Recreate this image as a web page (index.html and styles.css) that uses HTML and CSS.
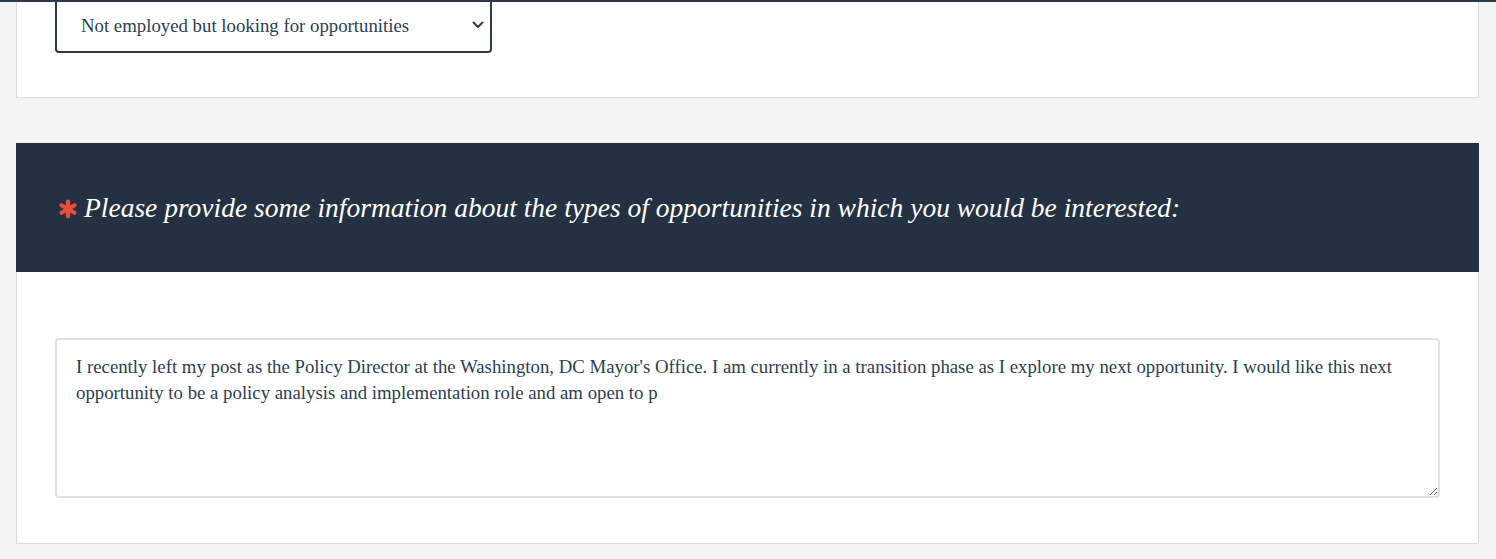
FILE: index.html
```html
<!DOCTYPE html>
<html>
<head>
<meta charset="utf-8">
<link rel="stylesheet" href="styles.css">
</head>
<body>
<div class="topbar"></div>
<main class="page">
  <section class="card card-first">
    <div class="card-body first-body">
      <div class="select-wrap">
        <select class="select">
          <option>Not employed but looking for opportunities</option>
        </select>
        <svg class="chev" width="12" height="8" viewBox="0 0 12 8"><path d="M1.5 1.5 L6 6 L10.5 1.5" fill="none" stroke="#2c3e50" stroke-width="2" stroke-linecap="round" stroke-linejoin="round"/></svg>
      </div>
    </div>
  </section>
  <section class="card">
    <header class="card-head">
      <svg class="req" width="20" height="20" viewBox="0 0 20 20">
        <g stroke="#e74c3c" stroke-width="4.2" stroke-linecap="round">
          <line x1="10" y1="2.5" x2="10" y2="17.5"/>
          <line x1="3.5" y1="6.2" x2="16.5" y2="13.8"/>
          <line x1="3.5" y1="13.8" x2="16.5" y2="6.2"/>
        </g>
      </svg>
      <h2 class="title">Please provide some information about the types of opportunities in which you would be interested:</h2>
    </header>
    <div class="card-body second-body">
      <textarea class="textarea">I recently left my post as the Policy Director at the Washington, DC Mayor's Office. I am currently in a transition phase as I explore my next opportunity. I would like this next opportunity to be a policy analysis and implementation role and am open to p</textarea>
    </div>
  </section>
</main>
</body>
</html>
```
FILE: styles.css
```css
* { box-sizing: border-box; }
html, body {
  margin: 0;
  padding: 0;
  background: #f4f4f4;
  font-family: "Liberation Serif", "Times New Roman", serif;
  color: #2c3e50;
  overflow: hidden;
}
.topbar {
  position: fixed;
  top: 0;
  left: 0;
  right: 0;
  height: 2px;
  background: #2c3a4b;
  z-index: 5;
}
.page {
  padding: 0 17px 0 16px;
}
.card {
  background: #fff;
  border: 1px solid #dddddd;
  width: 1463px;
}
.card-first {
  margin-top: -44px;
  margin-bottom: 45px;
}
.card-body {
  padding: 0 38px;
}
.first-body {
  padding-top: 40px;
  padding-bottom: 44px;
}
.select-wrap {
  position: relative;
  width: 437px;
}
.select {
  display: block;
  width: 437px;
  height: 56px;
  border: 2px solid #2c3a4b;
  border-radius: 4px;
  background: #fff;
  padding: 0 30px 0 24px;
  font-family: "Liberation Serif", "Times New Roman", serif;
  font-size: 18.8px;
  color: #2c3e50;
  appearance: none;
  -webkit-appearance: none;
  outline: none;
}
.chev {
  position: absolute;
  right: 8px;
  top: 24px;
  pointer-events: none;
}
.card-head {
  background: #243142;
  margin: -1px -1px 0 -1px;
  height: 129px;
  display: flex;
  align-items: center;
  padding: 0 0 0 42px;
  gap: 6px;
}
.req {
  flex: none;
  margin-top: 2px;
}
.title {
  margin: 0;
  font-weight: normal;
  font-style: italic;
  font-size: 27.5px;
  color: #ffffff;
  font-family: "Liberation Serif", "Times New Roman", serif;
}
.second-body {
  padding-top: 66px;
  padding-bottom: 45px;
}
.textarea {
  display: block;
  width: 1385px;
  height: 160px;
  border: 2px solid #dce3e6;
  border-radius: 4px;
  padding: 14px 19px 12px;
  font-family: "Liberation Serif", "Times New Roman", serif;
  font-size: 18.8px;
  line-height: 26px;
  color: #2c3e50;
  resize: vertical;
  outline: none;
  background: #fff;
}
```
